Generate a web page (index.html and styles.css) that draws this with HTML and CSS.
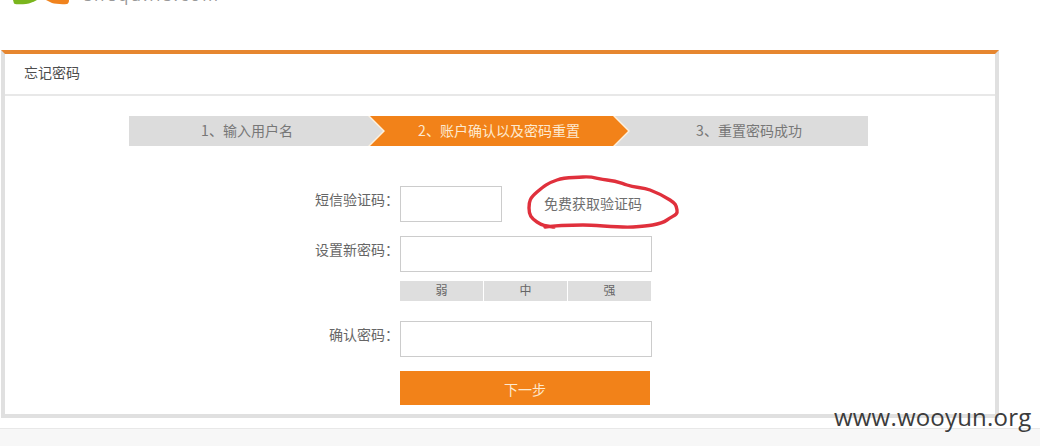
FILE: index.html
```html
<!DOCTYPE html>
<html lang="zh">
<head>
<meta charset="utf-8">
<title>忘记密码</title>
<link rel="stylesheet" href="styles.css">
</head>
<body>
<header class="top">
  <div class="logo">
    <svg class="logo-mark" width="72" height="5" viewBox="0 0 72 5"><path d="M13 0 H37 C33 2 30 3.5 26 4 C21 4.600 16 4.500 14 3.500 Z" fill="#7ab51d"/><path d="M46 0 H69 C69 2 68.500 3.500 67 4 C62 4.500 55 4 52 3 C50 2.200 48 1 46 0 Z" fill="#f0831e"/></svg>
    <span class="logo-text">shequ.ifs.com</span>
  </div>
</header>
<main class="panel">
  <h1 class="panel-title">忘记密码</h1>
  <ol class="steps">
    <li class="step step-first">1、输入用户名</li>
    <li class="step step-on">2、账户确认以及密码重置</li>
    <li class="step step-last">3、重置密码成功</li>
  </ol>
  <form class="form">
    <div class="row row-sms">
      <label class="label">短信验证码：</label>
      <div class="box box-short"></div>
      <a class="get-code">免费获取验证码
        <svg class="circle" width="160" height="58" viewBox="0 0 160 58"><path d="M21 53 C35 51 45 51 59 51 S95 54 109 53 S136 51 143 46 S154 41 153 36 S152 30 146 26 S134 19 126 16 S112 14 103 11 S93 7 83 6 S69 2 59 3 S42 3 33 6 S20 12 13 18 S5 27 5 34 S7 44 13 48 S22 52 30 53" fill="none" stroke="#e0303c" stroke-width="3.400" stroke-linecap="round"/></svg>
      </a>
    </div>
    <div class="row">
      <label class="label">设置新密码：</label>
      <div class="box"></div>
    </div>
    <div class="strength">
      <span class="level">弱</span><span class="level">中</span><span class="level">强</span>
    </div>
    <div class="row row-confirm">
      <label class="label">确认密码：</label>
      <div class="box"></div>
    </div>
    <div class="submit">下一步</div>
  </form>
</main>
<footer class="foot"></footer>
<div class="watermark">www.wooyun.org</div>
</body>
</html>
```
FILE: styles.css
```css
* { box-sizing: border-box; }
html, body { margin: 0; padding: 0; }
body {
  width: 1040px;
  height: 446px;
  overflow: hidden;
  position: relative;
  background: #fff;
  font-family: "Noto Sans CJK SC", "Liberation Sans", sans-serif;
  color: #666;
  font-size: 14px;
}
.top { height: 50px; overflow: hidden; }
.logo { display: flex; height: 12px; align-items: flex-start; }
.logo-mark { display: block; flex: none; }
.logo-text {
  margin-left: 12px;
  margin-top: -17px;
  font: 17px/24px "Open Sans", sans-serif;
  letter-spacing: 2px;
  color: #999;
}
.panel {
  width: 998px;
  height: 368px;
  margin-left: 1px;
  background: #fff;
  border: 4px solid #e0e0e0;
  border-top-color: #e6862f;
}
.panel-title {
  margin: 0;
  height: 42px;
  padding-left: 19px;
  border-bottom: 2px solid #e8e8e8;
  font-size: 14px;
  font-weight: 400;
  line-height: 37px;
  color: #4d4d4d;
}
.steps {
  list-style: none;
  position: relative;
  display: flex;
  width: 739px;
  height: 30px;
  margin: 20px 0 0 124px;
  padding: 0;
  background: #dcdcdc;
}
.steps::after {
  content: "";
  position: absolute;
  left: 239px;
  top: 0;
  width: 262px;
  height: 30px;
  background: #fdf1df;
  clip-path: polygon(0 0, 247px 0, 262px 15px, 247px 30px, 0 30px, 15px 15px);
}
.step {
  line-height: 28px;
  text-align: center;
  color: #777;
}
.step-first { width: 241px; padding-right: 5px; }
.step-on {
  position: relative;
  z-index: 1;
  width: 258px;
  margin-right: -12px;
  color: #fde9cf;
  background: #f28219;
  clip-path: polygon(0 0, 243px 0, 258px 15px, 243px 30px, 0 30px, 15px 15px);
}
.step-last { flex: 1; padding: 0 2px 0 16px; }
.form { margin: 40px 0 0 0; }
.row { display: flex; height: 36px; margin-left: 395px; position: relative; }
.label {
  position: absolute;
  right: calc(100% + 1px);
  top: -5px;
  white-space: nowrap;
  line-height: 36px;
  color: #666;
}
.box { width: 252px; height: 36px; border: 1px solid #ccc; background: #fff; }
.box-short { width: 102px; }
.row-sms { margin-bottom: 14px; }
.row-sms .get-code { margin-left: 42px; }
.get-code {
  position: relative;
  margin-top: 7px;
  font-size: 14px;
  line-height: 20px;
  color: #6e6e6e;
  white-space: nowrap;
}
.circle { position: absolute; left: -20px; top: -19px; }
.strength {
  display: flex;
  gap: 1px;
  width: 251px;
  height: 20px;
  margin: 9px 0 20px 395px;
}
.level {
  flex: 1;
  background: #dedede;
  text-align: center;
  font-size: 12px;
  line-height: 18px;
  color: #666;
}
.submit {
  width: 250px;
  height: 34px;
  margin: 14px 0 0 395px;
  background: #f28219;
  color: #fde9cf;
  text-align: center;
  line-height: 36px;
}
.foot {
  height: 18px;
  margin-top: 10px;
  background: #f7f7f7;
  border-top: 1px solid #e8e8e8;
}
.watermark {
  position: absolute;
  left: 834px;
  top: 402px;
  font: 24px/30px "Open Sans", sans-serif;
  color: #3c3c3c;
  letter-spacing: 0.2px;
}
```
